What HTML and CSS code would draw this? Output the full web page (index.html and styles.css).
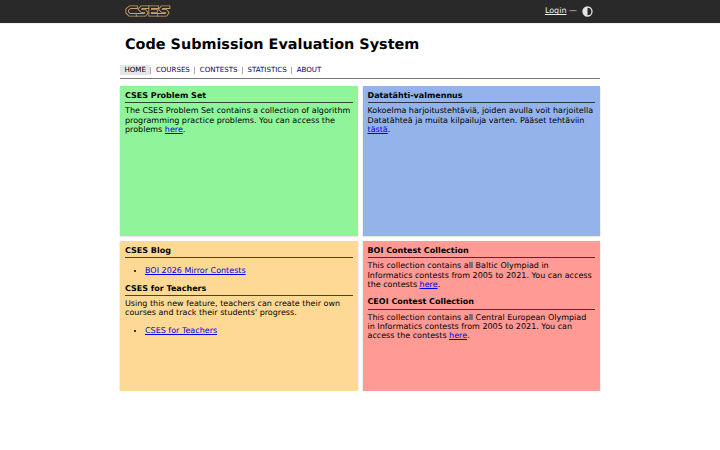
FILE: index.html
```
<!DOCTYPE html>
<html lang="en">
<head>
    <meta charset="UTF-8">
    <meta name="viewport" content="width=device-width, initial-scale=1.0">
    <title>CSES</title>
    <link rel="stylesheet" href="styles.css">
</head>
<body>
    <div class="header">
        <div class="header-inner">
            <a href="#" class="logo" aria-label="CSES">
                <svg width="46" height="12" viewBox="0 0 46 12">
                    <g class="logo-outer">
                        <path d="M11 2.2H5L2.2 4.5V7.5L4.5 9.8H10"/>
                        <path d="M22.5 2.2H16.5L14.8 4.2L16.5 6H20L21.5 7.8L20 9.8H12.5"/>
                        <path d="M32 2.2H25.2V9.8H31.5M25.2 6H31"/>
                        <path d="M43.5 2.2H37L35.3 4.2L37 6H41L42.5 7.8L41 9.8H34"/>
                    </g>
                    <g class="logo-inner">
                        <path d="M11 2.2H5L2.2 4.5V7.5L4.5 9.8H10"/>
                        <path d="M22.5 2.2H16.5L14.8 4.2L16.5 6H20L21.5 7.8L20 9.8H12.5"/>
                        <path d="M32 2.2H25.2V9.8H31.5M25.2 6H31"/>
                        <path d="M43.5 2.2H37L35.3 4.2L37 6H41L42.5 7.8L41 9.8H34"/>
                    </g>
                </svg>
            </a>
            <div class="controls">
                <a href="#" class="account">Login</a>
                <span>—</span>
                <svg class="theme" width="11" height="11" viewBox="0 0 11 11">
                    <circle cx="5.5" cy="5.5" r="4.5"/>
                    <path d="M5.5 .9a4.6 4.6 0 0 0 0 9.2z"/>
                </svg>
            </div>
        </div>
    </div>

    <div class="container">
        <h1>Code Submission Evaluation System</h1>
        <ul class="nav">
            <li><a href="#" class="current">Home</a></li>
            <li><a href="#">Courses</a></li>
            <li><a href="#">Contests</a></li>
            <li><a href="#">Statistics</a></li>
            <li><a href="#">About</a></li>
        </ul>

        <div class="content">
            <div class="box green">
                <h4>CSES Problem Set</h4>
                <p>The CSES Problem Set contains a collection of algorithm programming practice problems. You can access the problems <a href="#">here</a>.</p>
            </div>
            <div class="box blue">
                <h4>Datatähti-valmennus</h4>
                <p>Kokoelma harjoitustehtäviä, joiden avulla voit harjoitella Datatähteä ja muita kilpailuja varten. Pääset tehtäviin <a href="#">tästä</a>.</p>
            </div>
            <div class="box orange">
                <h4>CSES Blog</h4>
                <ul>
                    <li><a href="#">BOI 2026 Mirror Contests</a></li>
                </ul>
                <h4>CSES for Teachers</h4>
                <p>Using this new feature, teachers can create their own courses and track their students' progress.</p>
                <ul>
                    <li><a href="#">CSES for Teachers</a></li>
                </ul>
            </div>
            <div class="box red">
                <h4>BOI Contest Collection</h4>
                <p>This collection contains all Baltic Olympiad in Informatics contests from 2005 to 2021. You can access the contests <a href="#">here</a>.</p>
                <h4>CEOI Contest Collection</h4>
                <p>This collection contains all Central European Olympiad in Informatics contests from 2005 to 2021. You can access the contests <a href="#">here</a>.</p>
            </div>
        </div>
    </div>
</body>
</html>
```

FILE: styles.css
```
body {
    font-family: "DejaVu Sans", sans-serif;
    font-size: 8px;
    line-height: 9.33px;
    margin: 0;
    color: #000;
    background: #fff;
    text-rendering: geometricPrecision;
}

a {
    color: #00e;
}

.header {
    height: 23px;
    background: #292929;
    box-shadow: 0 0 1px rgba(0, 0, 0, 0.4);
}

.header-inner {
    width: 470px;
    height: 22px;
    margin: 0 auto;
    display: flex;
    align-items: center;
    justify-content: space-between;
}

.logo {
    display: flex;
}

.logo path {
    fill: none;
}

.logo-outer {
    stroke: #c8a26a;
    stroke-width: 3.6;
    stroke-linecap: square;
}

.logo-inner {
    stroke: #292929;
    stroke-width: 1.8;
    stroke-linecap: square;
}

.controls {
    display: flex;
    align-items: center;
    gap: 2.5px;
    color: #ddd;
    padding-right: 2px;
}

.account {
    color: #eee;
}

.theme {
    margin-left: 2.5px;
}

.theme circle {
    fill: none;
    stroke: #e6e6e6;
    stroke-width: 1.3;
}

.theme path {
    fill: #e6e6e6;
}

.container {
    width: 480px;
    margin: 0 auto;
}

h1 {
    font-size: 14.4px;
    line-height: 16px;
    margin: 14px 5px 12px;
}

.nav {
    list-style: none;
    display: flex;
    margin: 0 0 7px;
    padding: 0 0 3px;
    border-bottom: 1px solid #777;
    font-size: 7.05px;
    line-height: 10px;
    text-transform: uppercase;
}

.nav li {
    display: flex;
    align-items: center;
}

.nav li + li::before {
    content: "";
    width: 1px;
    height: 7px;
    background: #aaa;
}

.nav a {
    color: #000080;
    text-decoration: none;
    padding: 0 4.5px;
}

.nav .current {
    color: #000;
    background: #e6e6e6;
}

.content {
    display: grid;
    grid-template-columns: 1fr 1fr;
    grid-auto-rows: 150px;
    gap: 5px;
}

.box {
    padding: 5px;
    box-sizing: border-box;
    box-shadow: 0 0.5px 1.5px rgba(0, 0, 0, 0.25);
}

.box h4 {
    font-size: 8px;
    margin: 0 0 3px;
    padding-bottom: 2px;
    border-bottom: 1px solid rgba(0, 0, 0, 0.7);
}

.box p {
    margin: 0 0 8px;
}

.box ul {
    margin: 8px 0;
    padding-left: 20px;
}

.green {
    background: #90f49b;
}

.blue {
    background: #94b3eb;
}

.orange {
    background: #fed995;
}

.red {
    background: #ff9a95;
}
```
